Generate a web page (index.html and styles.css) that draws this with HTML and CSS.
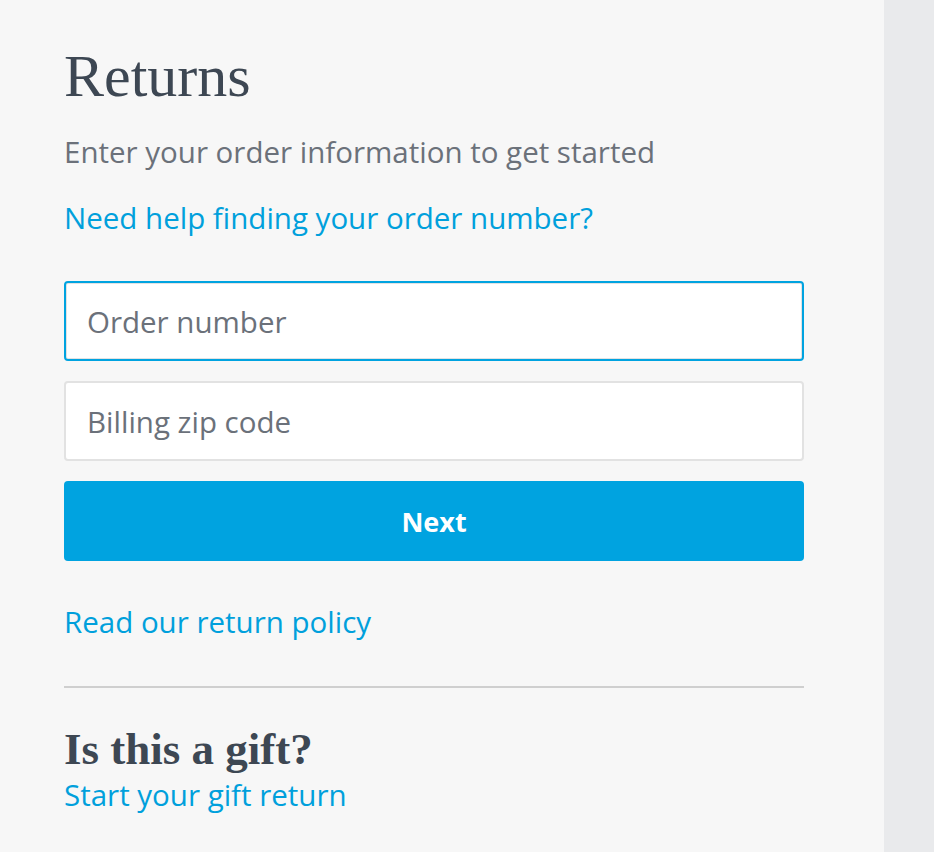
FILE: index.html
```html
<!DOCTYPE html>
<html lang="en">
<head>
    <meta charset="UTF-8">
    <meta name="viewport" content="width=device-width, initial-scale=1.0">
    <title>Returns</title>
    <link rel="stylesheet" href="styles.css">
</head>
<body>
    <div class="page">
        <main class="returns-panel">
            <h1 class="page-title">Returns</h1>
            <p class="intro">Enter your order information to get started</p>
            <a class="link help-link" href="#">Need help finding your order number?</a>

            <form class="lookup-form">
                <input class="field is-focused" type="text" placeholder="Order number">
                <input class="field" type="text" placeholder="Billing zip code">
                <button class="next-btn" type="button">Next</button>
            </form>

            <a class="link policy-link" href="#">Read our return policy</a>

            <hr class="divider">

            <h2 class="gift-title">Is this a gift?</h2>
            <a class="link gift-link" href="#">Start your gift return</a>
        </main>
        <aside class="side-strip"></aside>
    </div>
</body>
</html>
```

FILE: styles.css
```css
* {
    margin: 0;
    padding: 0;
    box-sizing: border-box;
}

body {
    font-family: 'Open Sans', 'Noto Sans', sans-serif;
    background-color: #e9eaec;
}

.page {
    display: flex;
    min-height: 852px;
}

.returns-panel {
    width: 884px;
    background-color: #f7f7f7;
    padding: 40px 80px 40px 64px;
    display: flex;
    flex-direction: column;
    align-items: flex-start;
}

.side-strip {
    flex: 1;
    background-color: #e9eaec;
}

.page-title {
    font-family: 'Liberation Serif', serif;
    font-weight: normal;
    font-size: 60px;
    line-height: 72px;
    color: #3d4753;
}

.intro {
    margin-top: 20px;
    font-size: 29.5px;
    line-height: 40px;
    color: #6b717a;
}

.link {
    font-size: 29.5px;
    line-height: 40px;
    color: #00a0dc;
    text-decoration: none;
}

.help-link {
    margin-top: 26px;
}

.lookup-form {
    width: 740px;
    margin-top: 43px;
    display: flex;
    flex-direction: column;
    gap: 20px;
}

.field {
    height: 80px;
    padding: 0 21px;
    border: 2px solid #e2e2e2;
    border-radius: 4px;
    background-color: #fff;
    font-family: inherit;
    font-size: 29.5px;
    color: #3d4753;
    outline: none;
}

.field::placeholder {
    color: #6b717a;
}

.field.is-focused {
    border-color: #00a3e0;
    box-shadow: inset 0 0 0 1px #e2e2e2;
}

.next-btn {
    height: 80px;
    border: none;
    border-radius: 4px;
    background-color: #00a3e0;
    color: #fff;
    font-family: inherit;
    font-size: 27px;
    font-weight: bold;
    cursor: pointer;
}

.policy-link {
    margin-top: 41px;
}

.divider {
    width: 740px;
    margin-top: 44px;
    border: none;
    border-top: 2px solid #cfcfcf;
}

.gift-title {
    margin-top: 37px;
    font-family: 'Liberation Serif', serif;
    font-size: 45px;
    line-height: 48px;
    color: #3d4753;
}

.gift-link {
    margin-top: 2px;
}
```
